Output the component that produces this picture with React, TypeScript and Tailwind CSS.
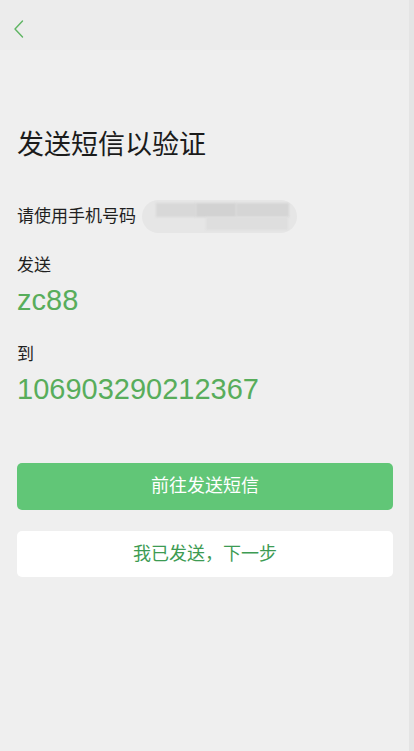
const font = "font-['Liberation_Sans','Noto_Sans_CJK_SC',sans-serif]";

const App = () => {
  return (
    <div className={`w-[414px] h-[751px] bg-[#efefef] flex flex-col ${font} relative overflow-hidden`}>
      <div className="h-[50px] bg-[#ececec] flex items-start pt-[19px] px-[13px]">
        <svg width="11" height="20" viewBox="0 0 11 20" fill="none">
          <path d="M9.5 2 L2 10 L9.5 18" stroke="#5fb563" strokeWidth="1.4" strokeLinecap="round" strokeLinejoin="round" />
        </svg>
      </div>

      <div className="px-[17px] flex flex-col">
        <h1 className="mt-[77px] text-[27px] leading-[36px] text-[#1b1b1b]">发送短信以验证</h1>

        <div className="mt-[37px] flex items-center gap-[6px]">
          <span className="text-[17px] leading-[24px] text-[#1f1f1f]">请使用手机号码</span>
          <div className="relative w-[155px] h-[33px] rounded-full bg-[#e6e6e6] overflow-hidden">
            <div className="absolute left-[14px] top-[3px] w-[40px] h-[14px] bg-[#d8d8d8] blur-[1px]" />
            <div className="absolute left-[54px] top-[3px] w-[40px] h-[14px] bg-[#d2d2d2] blur-[1px]" />
            <div className="absolute left-[94px] top-[3px] w-[53px] h-[14px] bg-[#d5d5d5] blur-[1px]" />
            <div className="absolute left-[64px] top-[17px] w-[82px] h-[13px] bg-[#dedede] blur-[1px]" />
          </div>
        </div>

        <div className="mt-[21px] text-[17px] leading-[24px] text-[#1f1f1f]">发送</div>
        <div className="mt-[5px] text-[29px] leading-[34px] text-[#58ad5b]">zc88</div>

        <div className="mt-[26px] text-[17px] leading-[24px] text-[#1f1f1f]">到</div>
        <div className="mt-[5px] text-[29px] leading-[34px] text-[#58ad5b]">106903290212367</div>

        <button className="mt-[57px] h-[47px] w-[376px] rounded-[5px] bg-[#61c677] text-white text-[18px]">
          前往发送短信
        </button>
        <button className="mt-[21px] h-[46px] w-[376px] rounded-[5px] bg-white text-[#3d9b53] text-[18px]">
          我已发送，下一步
        </button>
      </div>

      <div className="absolute right-0 top-0 w-[5px] h-full bg-[#e4e4e4]" />
    </div>
  );
};

export default App;
